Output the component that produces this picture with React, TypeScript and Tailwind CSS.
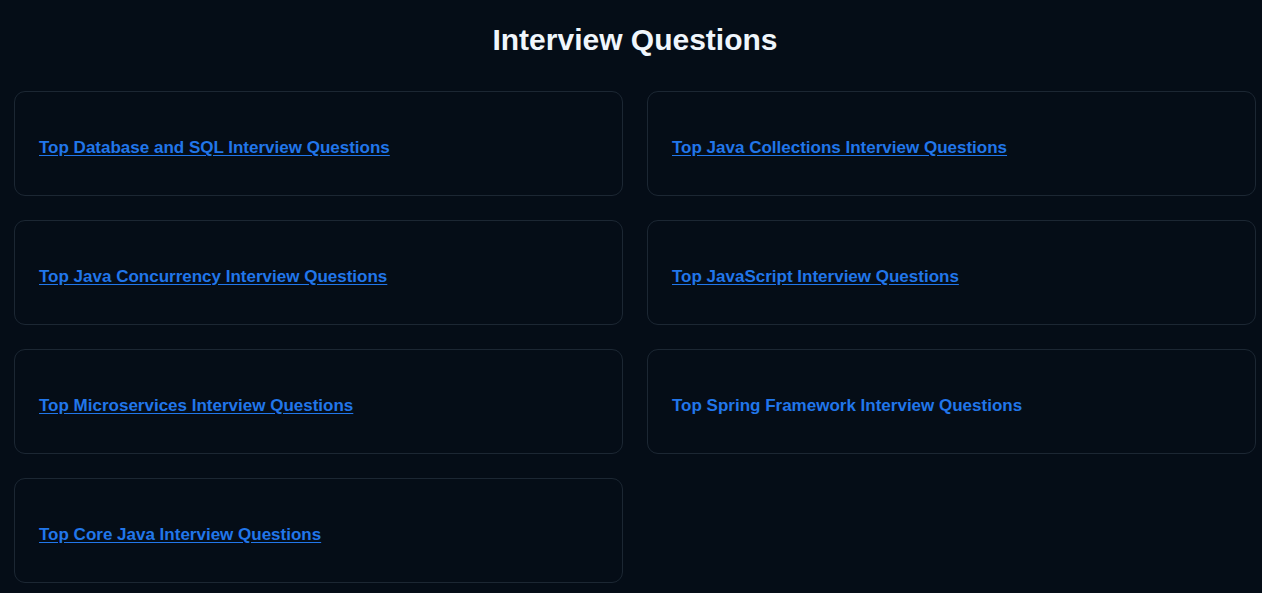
const topics = [
  { title: "Top Database and SQL Interview Questions", visited: true },
  { title: "Top Java Collections Interview Questions", visited: true },
  { title: "Top Java Concurrency Interview Questions", visited: true },
  { title: "Top JavaScript Interview Questions", visited: true },
  { title: "Top Microservices Interview Questions", visited: true },
  { title: "Top Spring Framework Interview Questions", visited: false },
  { title: "Top Core Java Interview Questions", visited: true },
];

export default function App() {
  return (
    <div className="min-h-screen bg-[#050d17] font-['Liberation_Sans',Arial,sans-serif] pl-[14px] pr-[6px] pt-[22px] pb-[10px]">
      <h1 className="text-center text-[30px] leading-[36px] font-bold text-[#f0f6fc] mb-[33px]">
        Interview Questions
      </h1>
      <div className="grid grid-cols-2 gap-[24px]">
        {topics.map((t) => (
          <div
            key={t.title}
            className="h-[105px] rounded-[11px] border border-[#1c2733] bg-[#050d17] px-6 pt-[44px]"
          >
            <a
              href="#"
              className={`text-[17px] leading-6 font-bold text-[#2176ea] ${
                t.visited ? "underline underline-offset-2" : "no-underline"
              }`}
            >
              {t.title}
            </a>
          </div>
        ))}
      </div>
    </div>
  );
}
